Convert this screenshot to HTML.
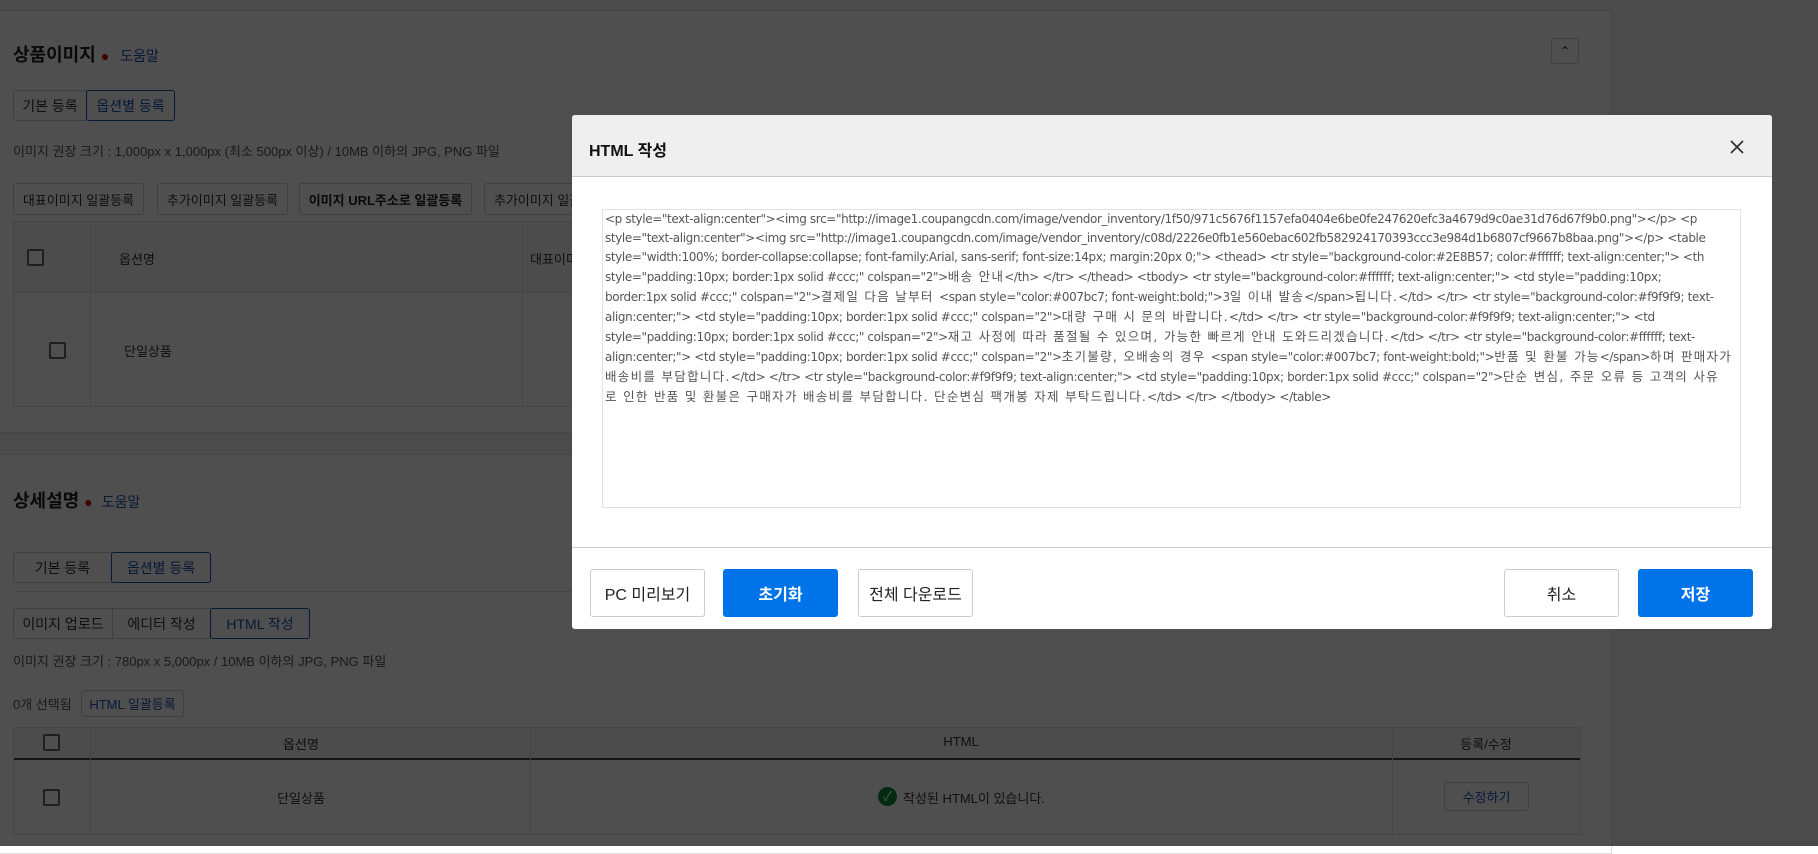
<!DOCTYPE html>
<html><head><meta charset="utf-8"><style>
*{box-sizing:border-box;margin:0;padding:0}
body{width:1818px;height:846px;overflow:hidden;position:relative;background:#fff;font-family:"Liberation Sans","Noto Sans CJK KR",sans-serif;color:#333;font-size:14px}
.a{position:absolute}
.btn{position:absolute;border:1px solid #ccc;background:#fff;border-radius:3px;display:flex;align-items:center;justify-content:center;font-size:13px;color:#333;white-space:nowrap;overflow:hidden}
.sel{border-color:#1a50b5;color:#1a50b5}
.cb{position:absolute;width:17px;height:17px;border:2px solid #666;border-radius:2px;background:#fff}
.line{position:absolute;background:#ddd}
.t{position:absolute;white-space:nowrap}
#ov{position:absolute;left:0;top:0;width:1818px;height:846px;background:rgba(0,0,0,.69)}
#m{position:absolute;left:572px;top:115px;width:1200px;height:514px;background:#fff;border-radius:3px;overflow:hidden}
#ta{position:absolute;left:30px;top:94px;width:1139px;height:299px;border:1px solid #dde3ea;padding:0 0 0 2px;font-family:"DejaVu Sans","Noto Sans CJK KR",sans-serif;font-size:12px;line-height:19px;color:#555;white-space:nowrap;overflow:hidden;letter-spacing:-0.38px}
#ta k{font-size:12.5px;letter-spacing:1.3px}
.mb{position:absolute;top:454px;height:48px;width:115px;border:1px solid #ccc;border-radius:3px;background:#fff;display:flex;align-items:center;justify-content:center;font-size:16px;color:#222}
.pr{background:#0073e9;border-color:#0073e9;color:#fff;font-weight:bold}
</style></head><body>
<div class="a" style="left:0;top:0;width:1818px;height:846px;background:#f2f2f2"></div>
<div class="a" style="left:0;top:10px;width:1612px;height:423px;background:#fff;border:1px solid #ddd;border-left:none"></div>
<div class="a" style="left:0;top:454px;width:1612px;height:400px;background:#fff;border:1px solid #ddd;border-left:none"></div>
<div class="btn" style="left:1551px;top:38px;width:28px;height:26px;font-size:12px">&#8963;</div>
<div class="t" style="left:13px;top:41px;font-size:18px;font-weight:bold;color:#222">상품이미지 <span style="color:#c00;font-size:14px">●</span> <span style="color:#1a50b5;font-size:14px;font-weight:normal;margin-left:6px">도움말</span></div>
<div class="btn" style="left:13px;top:90px;width:74px;height:31px;font-size:14px;border-radius:3px 0 0 3px">기본 등록</div>
<div class="btn sel" style="left:86px;top:90px;width:89px;height:31px;font-size:14px">옵션별 등록</div>
<div class="t" style="left:13px;top:141px;font-size:13px;color:#555">이미지 권장 크기 : 1,000px x 1,000px (최소 500px 이상) / 10MB 이하의 JPG, PNG 파일</div>
<div class="btn" style="left:13px;top:183px;width:131px;height:32px">대표이미지 일괄등록</div>
<div class="btn" style="left:157px;top:183px;width:131px;height:32px">추가이미지 일괄등록</div>
<div class="btn" style="left:299px;top:183px;width:173px;height:32px;font-weight:bold;color:#222">이미지 URL주소로 일괄등록</div>
<div class="btn" style="left:484px;top:183px;width:131px;height:32px">추가이미지 일괄등록</div>
<div class="a" style="left:13px;top:221px;width:1580px;height:186px;border:1px solid #ddd"></div>
<div class="a" style="left:14px;top:222px;width:1578px;height:71px;background:#f4f4f4;border-bottom:1px solid #ddd"></div>
<div class="line" style="left:90px;top:222px;width:1px;height:184px"></div>
<div class="line" style="left:522px;top:222px;width:1px;height:184px"></div>
<div class="cb" style="left:27px;top:249px"></div>
<div class="t" style="left:119px;top:249px;font-size:13px">옵션명</div>
<div class="t" style="left:530px;top:249px;font-size:13px">대표이미지</div>
<div class="cb" style="left:49px;top:342px"></div>
<div class="t" style="left:124px;top:341px;font-size:13px">단일상품</div>

<div class="t" style="left:13px;top:487px;font-size:18px;font-weight:bold;color:#222">상세설명 <span style="color:#c00;font-size:14px">●</span> <span style="color:#1a50b5;font-size:14px;font-weight:normal;margin-left:4px">도움말</span></div>
<div class="btn" style="left:13px;top:552px;width:99px;height:31px;font-size:14px;border-radius:3px 0 0 3px">기본 등록</div>
<div class="btn sel" style="left:111px;top:552px;width:100px;height:31px;font-size:14px">옵션별 등록</div>
<div class="line" style="left:13px;top:591px;width:1580px;height:1px"></div>
<div class="btn" style="left:13px;top:608px;width:100px;height:31px;font-size:14px;border-radius:3px 0 0 3px">이미지 업로드</div>
<div class="btn" style="left:112px;top:608px;width:99px;height:31px;font-size:14px;border-radius:0">에디터 작성</div>
<div class="btn sel" style="left:210px;top:608px;width:100px;height:31px;font-size:14px">HTML 작성</div>
<div class="t" style="left:13px;top:651px;font-size:13px;color:#555">이미지 권장 크기 : 780px x 5,000px / 10MB 이하의 JPG, PNG 파일</div>
<div class="t" style="left:13px;top:694px;font-size:13px;color:#555">0개 선택됨</div>
<div class="btn" style="left:81px;top:690px;width:103px;height:27px;color:#1a50b5">HTML 일괄등록</div>
<div class="a" style="left:13px;top:727px;width:1568px;height:108px;border:1px solid #ddd"></div>
<div class="a" style="left:14px;top:728px;width:1566px;height:32px;background:#f4f4f4;border-bottom:2px solid #444"></div>
<div class="line" style="left:90px;top:728px;width:1px;height:106px"></div>
<div class="line" style="left:530px;top:728px;width:1px;height:106px"></div>
<div class="line" style="left:1392px;top:728px;width:1px;height:106px"></div>
<div class="cb" style="left:43px;top:734px"></div>
<div class="t" style="left:301px;top:734px;font-size:13px;transform:translateX(-50%)">옵션명</div>
<div class="t" style="left:961px;top:734px;font-size:13px;transform:translateX(-50%)">HTML</div>
<div class="t" style="left:1486px;top:734px;font-size:13px;transform:translateX(-50%)">등록/수정</div>
<div class="cb" style="left:43px;top:789px"></div>
<div class="t" style="left:301px;top:788px;font-size:13px;transform:translateX(-50%)">단일상품</div>
<div class="a" style="left:878px;top:787px;width:19px;height:19px;border-radius:50%;background:#0a8a3a;color:#fff;font-size:13px;line-height:19px;text-align:center">✓</div>
<div class="t" style="left:903px;top:788px;font-size:13px">작성된 HTML이 있습니다.</div>
<div class="btn" style="left:1444px;top:782px;width:85px;height:29px;color:#1a50b5">수정하기</div>

<div id="ov"></div>

<div id="m">
<div class="a" style="left:0;top:0;width:1200px;height:62px;background:#efefef;border-bottom:1px solid #ccc"></div>
<div class="t" style="left:17px;top:22px;font-size:16px;font-weight:bold;color:#111">HTML 작성</div>
<svg class="a" style="left:1157px;top:24px" width="16" height="16" viewBox="0 0 16 16"><path d="M2 2L14 14M14 2L2 14" stroke="#333" stroke-width="1.8"/></svg>
<div id="ta">&lt;p style="text-align:center"&gt;&lt;img src="http://image1.coupangcdn.com/image/vendor_inventory/1f50/971c5676f1157efa0404e6be0fe247620efc3a4679d9c0ae31d76d67f9b0.png"&gt;&lt;/p&gt; &lt;p<br>style="text-align:center"&gt;&lt;img src="http://image1.coupangcdn.com/image/vendor_inventory/c08d/2226e0fb1e560ebac602fb582924170393ccc3e984d1b6807cf9667b8baa.png"&gt;&lt;/p&gt; &lt;table<br>style="width:100%; border-collapse:collapse; font-family:Arial, sans-serif; font-size:14px; margin:20px 0;"&gt; &lt;thead&gt; &lt;tr style="background-color:#2E8B57; color:#ffffff; text-align:center;"&gt; &lt;th<br>style="padding:10px; border:1px solid #ccc;" colspan="2"&gt;<k>배송 안내</k>&lt;/th&gt; &lt;/tr&gt; &lt;/thead&gt; &lt;tbody&gt; &lt;tr style="background-color:#ffffff; text-align:center;"&gt; &lt;td style="padding:10px;<br>border:1px solid #ccc;" colspan="2"&gt;<k>결제일 다음 날부터 </k>&lt;span style="color:#007bc7; font-weight:bold;"&gt;3<k>일 이내 발송</k>&lt;/span&gt;<k>됩니다.</k>&lt;/td&gt; &lt;/tr&gt; &lt;tr style="background-color:#f9f9f9; text-<br>align:center;"&gt; &lt;td style="padding:10px; border:1px solid #ccc;" colspan="2"&gt;<k>대량 구매 시 문의 바랍니다.</k>&lt;/td&gt; &lt;/tr&gt; &lt;tr style="background-color:#f9f9f9; text-align:center;"&gt; &lt;td<br>style="padding:10px; border:1px solid #ccc;" colspan="2"&gt;<k>재고 사정에 따라 품절될 수 있으며, 가능한 빠르게 안내 도와드리겠습니다.</k>&lt;/td&gt; &lt;/tr&gt; &lt;tr style="background-color:#ffffff; text-<br>align:center;"&gt; &lt;td style="padding:10px; border:1px solid #ccc;" colspan="2"&gt;<k>초기불량, 오배송의 경우 </k>&lt;span style="color:#007bc7; font-weight:bold;"&gt;<k>반품 및 환불 가능</k>&lt;/span&gt;<k>하며 판매자가</k><br><k>배송비를 부담합니다.</k>&lt;/td&gt; &lt;/tr&gt; &lt;tr style="background-color:#f9f9f9; text-align:center;"&gt; &lt;td style="padding:10px; border:1px solid #ccc;" colspan="2"&gt;<k>단순 변심, 주문 오류 등 고객의 사유</k><br><k>로 인한 반품 및 환불은 구매자가 배송비를 부담합니다. 단순변심 팩개봉 자제 부탁드립니다.</k>&lt;/td&gt; &lt;/tr&gt; &lt;/tbody&gt; &lt;/table&gt;</div>
<div class="a" style="left:0;top:432px;width:1200px;height:1px;background:#ccc"></div>
<div class="mb" style="left:18px">PC 미리보기</div>
<div class="mb pr" style="left:151px">초기화</div>
<div class="mb" style="left:286px">전체 다운로드</div>
<div class="mb" style="left:932px">취소</div>
<div class="mb pr" style="left:1066px">저장</div>
</div>
</body></html>
